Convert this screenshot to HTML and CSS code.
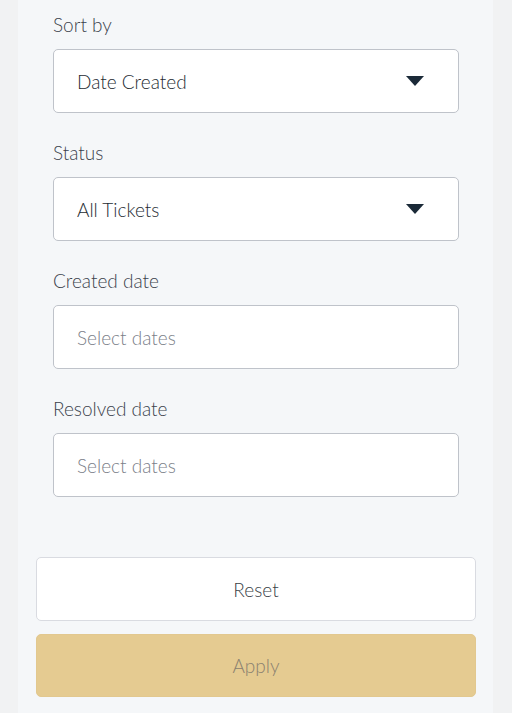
FILE: index.html
```html
<!DOCTYPE html>
<html>
<head>
<meta charset="utf-8">
<link rel="stylesheet" href="styles.css">
</head>
<body>
<div class="page">
  <div class="panel">
    <div class="fields">
      <div class="field">
        <div class="label">Sort by</div>
        <div class="input">
          <span class="value">Date Created</span>
          <svg class="caret" width="18" height="10" viewBox="0 0 18 10"><polygon points="0,0 18,0 9,10" fill="#1b2a38"/></svg>
        </div>
      </div>
      <div class="field">
        <div class="label">Status</div>
        <div class="input">
          <span class="value">All Tickets</span>
          <svg class="caret" width="18" height="10" viewBox="0 0 18 10"><polygon points="0,0 18,0 9,10" fill="#1b2a38"/></svg>
        </div>
      </div>
      <div class="field">
        <div class="label">Created date</div>
        <div class="input"><span class="placeholder">Select dates</span></div>
      </div>
      <div class="field">
        <div class="label">Resolved date</div>
        <div class="input"><span class="placeholder">Select dates</span></div>
      </div>
    </div>
    <div class="actions">
      <div class="btn reset">Reset</div>
      <div class="btn apply">Apply</div>
    </div>
  </div>
</div>
</body>
</html>
```
FILE: styles.css
```css
html, body {
  margin: 0;
  padding: 0;
}
body {
  background: #f1f2f3;
  font-family: "Lato", "Open Sans", sans-serif;
  font-weight: 300;
}
.page {
  width: 512px;
  height: 713px;
  overflow: hidden;
  background: #f1f2f3;
}
.panel {
  margin: 0 19px 0 18px;
  height: 713px;
  box-sizing: border-box;
  background: #f5f7f9;
  padding: 13px 17px 16px 18px;
  display: flex;
  flex-direction: column;
}
.fields {
  padding: 0 17px;
  display: flex;
  flex-direction: column;
  gap: 28px;
}
.field {
  display: flex;
  flex-direction: column;
}
.label {
  font-size: 19px;
  line-height: 24px;
  color: #3b424c;
  margin-bottom: 12px;
}
.input {
  height: 64px;
  box-sizing: border-box;
  background: #fff;
  border: 1px solid #bfc3ca;
  border-radius: 5px;
  display: flex;
  align-items: center;
  justify-content: space-between;
  padding: 0 34px 0 23px;
  font-size: 19px;
}
.value {
  color: #262c33;
}
.placeholder {
  color: #7b8089;
}
.caret {
  display: block;
}
.actions {
  margin-top: 60px;
  display: flex;
  flex-direction: column;
  gap: 13px;
}
.btn {
  height: 64px;
  box-sizing: border-box;
  border-radius: 5px;
  display: flex;
  align-items: center;
  justify-content: center;
  font-size: 19px;
}
.reset {
  background: #fff;
  border: 1px solid #d9dbe1;
  color: #3a3f47;
}
.apply {
  height: 63px;
  background: #e5cb91;
  border: 1px solid #e2c88f;
  color: #8a8170;
}
```
